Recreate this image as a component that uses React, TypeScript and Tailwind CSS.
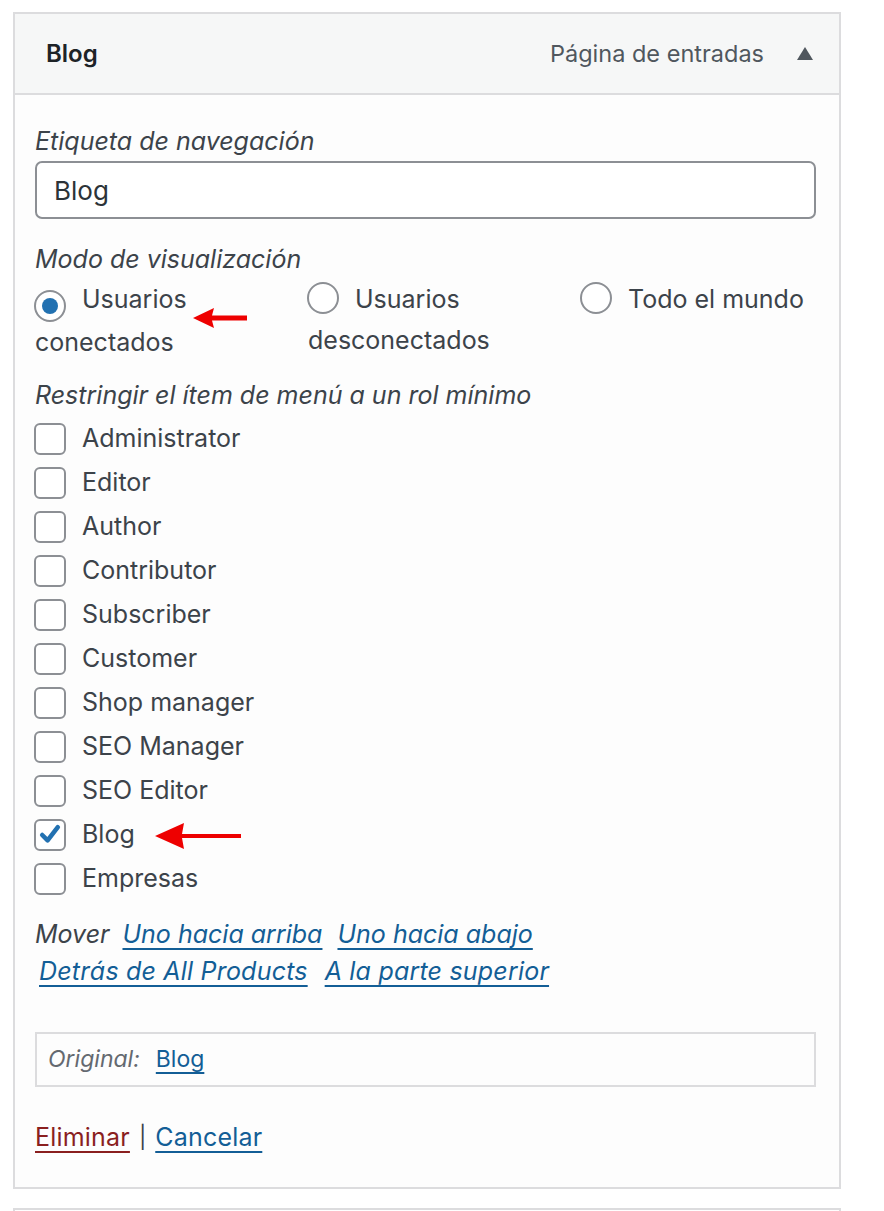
import React from "react";

const roles = [
  "Administrator",
  "Editor",
  "Author",
  "Contributor",
  "Subscriber",
  "Customer",
  "Shop manager",
  "SEO Manager",
  "SEO Editor",
  "Blog",
  "Empresas",
];

function Radio({ checked }: { checked?: boolean }) {
  return (
    <span className="inline-flex w-[32px] h-[32px] rounded-full border-2 border-[#8c8f94] bg-white items-center justify-center align-[-6px] mr-[16px] -ml-[1px]">
      {checked && <span className="w-[16px] h-[16px] rounded-full bg-[#2271b1]" />}
    </span>
  );
}

function Checkbox({ checked }: { checked?: boolean }) {
  return (
    <span className="flex w-[32px] h-[32px] -ml-[1px] rounded-[6px] border-2 border-[#8c8f94] bg-white items-center justify-center shrink-0">
      {checked && (
        <svg width="24" height="24" viewBox="0 0 20 20">
          <path d="M3.5 10 L8 14.5 L16.5 3.5" fill="none" stroke="#2271b1" strokeWidth="3.8" strokeLinecap="round" strokeLinejoin="round" />
        </svg>
      )}
    </span>
  );
}

export default function App() {
  const font = { fontFamily: "Inter, 'Noto Sans', 'Liberation Sans', sans-serif" };
  return (
    <div className="relative min-h-[1211px] bg-white pt-[12px] pl-[13px] text-[#3c434a]" style={font}>
      <div className="w-[828px] border-2 border-[#dcdcde] bg-[#fdfdfd]">
        <div className="h-[81px] bg-[#f6f7f7] border-b-2 border-[#dcdcde] flex items-center pl-[31px] pr-[26px]">
          <span className="text-[24px] font-semibold text-[#1d2327]">Blog</span>
          <span className="ml-auto text-[23.5px] text-[#50575e]">Página de entradas</span>
          <svg className="ml-[33px]" width="16" height="13" viewBox="0 0 16 13">
            <path d="M8 0 L16 13 L0 13 Z" fill="#50575e" />
          </svg>
        </div>
        <div className="pl-[20px] pr-[23px] pt-[28px] pb-[32px] text-[25px]">
          <div className="italic leading-[36px]">Etiqueta de navegación</div>
          <div className="mt-[2px] h-[58px] border-2 border-[#8c8f94] rounded-[7px] bg-white flex items-center pl-[17px] text-[26px] text-[#2c3338]">
            Blog
          </div>
          <div className="mt-[22px] italic leading-[36px]">Modo de visualización</div>
          <div className="grid grid-cols-[273px_273px_1fr] leading-[41px] pt-[2px]">
            <div>
              <Radio checked />Usuarios conectados
            </div>
            <div className="pr-[20px]">
              <Radio />Usuarios desconectados
            </div>
            <div>
              <Radio />Todo el mundo
            </div>
          </div>
          <div className="mt-[14px] italic leading-[36px]">Restringir el ítem de menú a un rol mínimo</div>
          <div className="mt-[4px]">
            {roles.map((r) => (
              <div key={r} className="h-[44px] flex items-center gap-[16px]">
                <Checkbox checked={r === "Blog"} />
                <span>{r}</span>
              </div>
            ))}
          </div>
          <div className="mt-[15px] italic leading-[37px]">
            <div className="flex">
              <span>Mover</span>
              <a className="ml-[13px] text-[#135e96] underline underline-offset-[5px] decoration-[1.5px]">Uno hacia arriba</a>
              <a className="ml-[15px] text-[#135e96] underline underline-offset-[5px] decoration-[1.5px]">Uno hacia abajo</a>
            </div>
            <div className="flex pl-[4px]">
              <a className="text-[#135e96] underline underline-offset-[5px] decoration-[1.5px] tracking-[0.2px]">Detrás de All Products</a>
              <a className="ml-[17px] text-[#135e96] underline underline-offset-[5px] decoration-[1.5px] tracking-[0.2px]">A la parte superior</a>
            </div>
          </div>
          <div className="mt-[42px] h-[55px] border-2 border-[#dcdcde] flex items-center pl-[11px] text-[23px]">
            <span className="italic text-[#646970]">Original:</span>
            <a className="ml-[16px] text-[#135e96] underline underline-offset-[5px] decoration-[1.5px]">Blog</a>
          </div>
          <div className="mt-[32px] leading-[36px] flex items-center">
            <a className="text-[#8a1f1f] underline underline-offset-[5px] decoration-[1.5px] tracking-[0.2px]">Eliminar</a>
            <span className="mx-[9px] text-[22px] text-[#3c434a]">|</span>
            <a className="text-[#135e96] underline underline-offset-[5px] decoration-[1.5px] tracking-[0.2px]">Cancelar</a>
          </div>
        </div>
      </div>
      <div className="mt-[19px] w-[828px] h-[4px] border-t-2 border-x-2 border-[#dcdcde]" />

      <svg className="absolute left-[190px] top-[306px]" width="60" height="24" viewBox="0 0 60 24">
        <path d="M3 12 L24 2 L22 9.5 L57 9.5 L57 14.5 L22 14.5 L24 22 Z" fill="#ee0000" />
      </svg>
      <svg className="absolute left-[152px] top-[822px]" width="92" height="30" viewBox="0 0 92 30">
        <path d="M3 14 L32 1 L30 12 L89 12 L89 16 L30 16 L32 27 Z" fill="#ee0000" />
      </svg>
    </div>
  );
}
